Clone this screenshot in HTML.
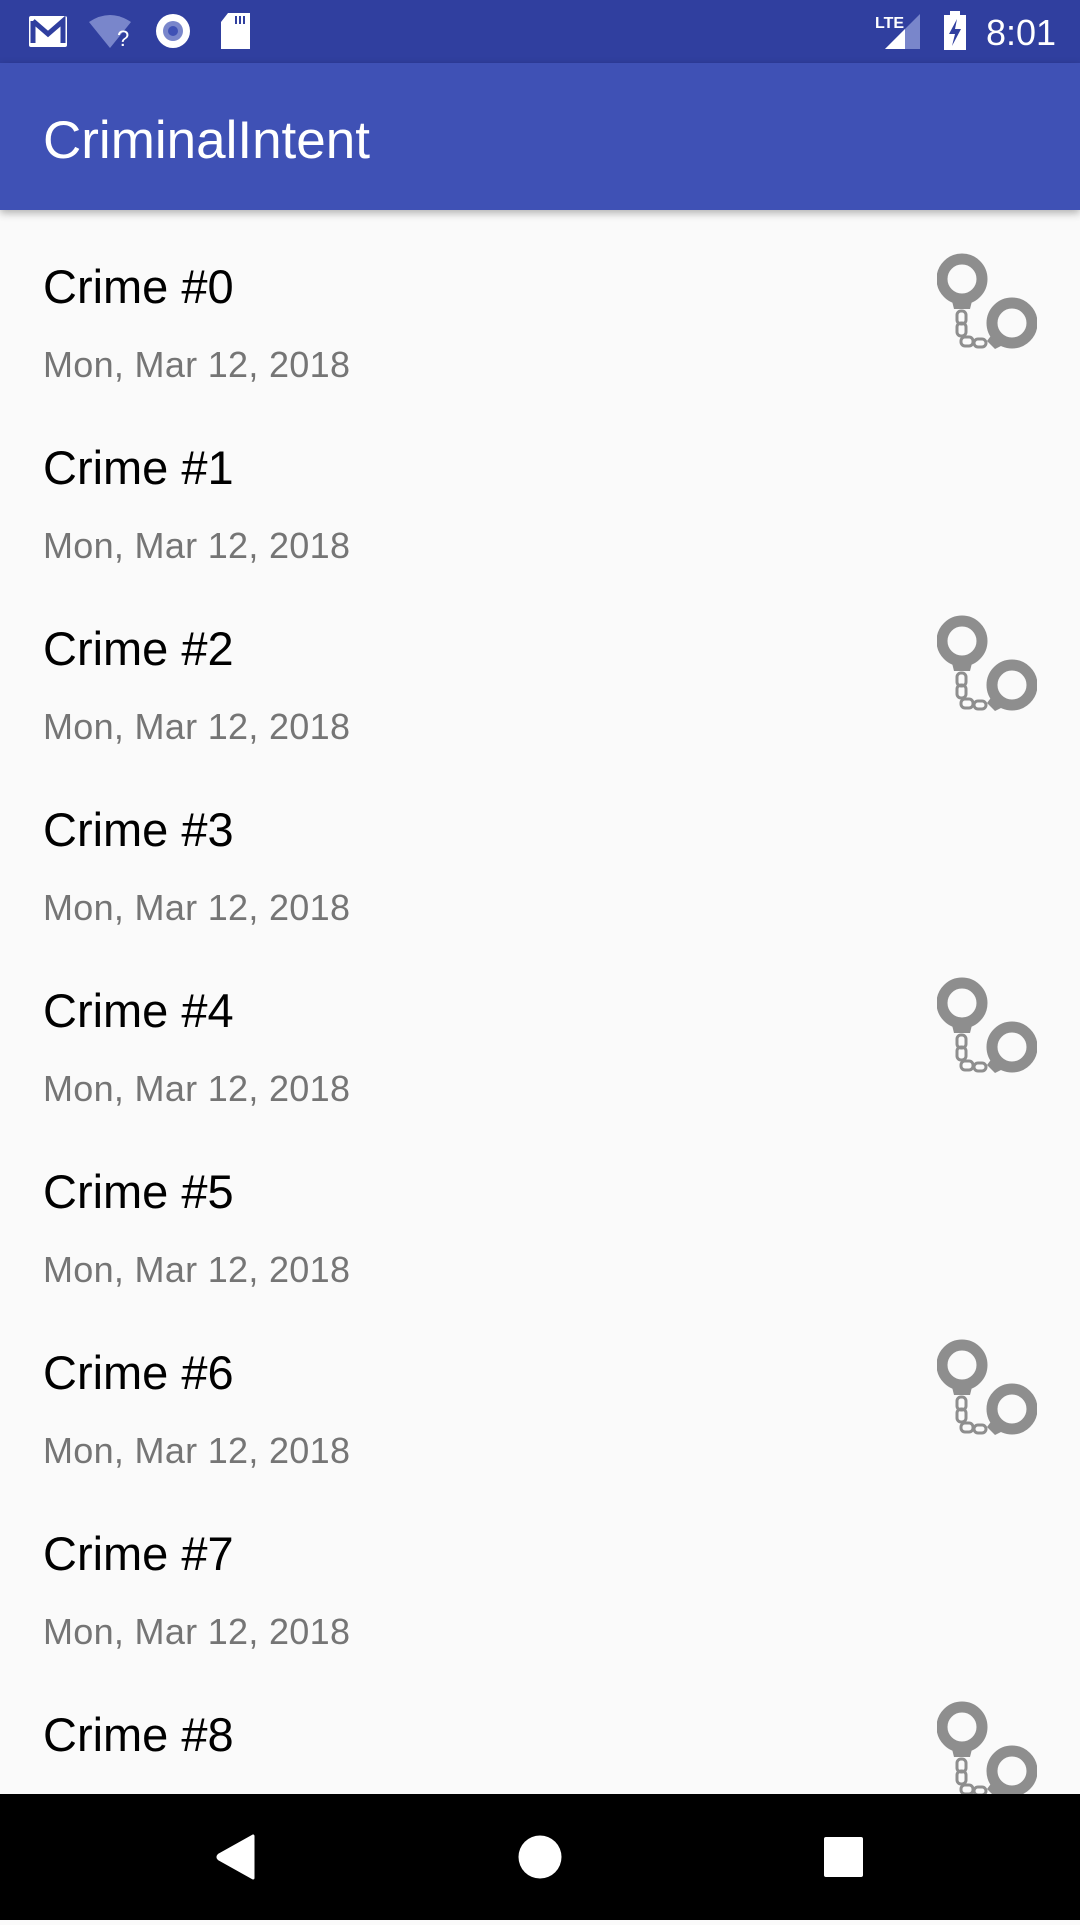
<!DOCTYPE html>
<html><head><meta charset="utf-8"><style>
*{margin:0;padding:0;box-sizing:border-box}
body{width:1080px;height:1920px;overflow:hidden;background:#FAFAFA;font-family:"Liberation Sans",sans-serif;position:relative}
.sb{position:absolute;top:0;left:0;width:1080px;height:63px;background:#303F9F}
.tb{position:absolute;top:63px;left:0;width:1080px;height:147px;background:#3F51B5;box-shadow:0 3px 8px rgba(0,0,0,.3)}
.tb span{position:absolute;left:43px;top:47px;color:#fff;font-size:53px;letter-spacing:0px}
.t{position:absolute;left:43px;font-size:47px;color:#000;letter-spacing:0px}
.d{position:absolute;left:43px;font-size:36px;color:#757575;letter-spacing:0.3px}
.ic{position:absolute;left:937px;width:100px;height:100px}
.nav{position:absolute;top:1794px;left:0;width:1080px;height:126px;background:#000}
</style></head><body>
<div class="sb">
<svg width="1080" height="63" style="position:absolute;left:0;top:0">
<rect x="29" y="16" width="38" height="31" rx="2" fill="#fff"/>
<path d="M33 21 V43 M33 21 L48 34 L63 21 V43" stroke="#303F9F" stroke-width="5" fill="none"/>
<path d="M89 22 Q110 8 131 22 L110 48 Z" fill="#7986CB"/>
<text x="117" y="46" font-size="22" fill="#fff" font-family="Liberation Sans">?</text>
<circle cx="173" cy="31" r="17" fill="#fff"/><circle cx="173" cy="31" r="10" fill="#7986CB"/><circle cx="173" cy="31" r="5" fill="#3F51B5"/>
<path d="M228 13 H250 V49 H221 V22 Z" fill="#fff"/>
<path d="M236 16 V24 M240 16 V24 M244 16 V24" stroke="#303F9F" stroke-width="2"/>
<path d="M885 49 L920 14 V49 Z" fill="#7986CB"/><path d="M885 49 L905 29 V49 Z" fill="#fff"/>
<text x="875" y="28" font-size="16" fill="#fff" font-family="Liberation Sans" font-weight="bold">LTE</text>
<rect x="944" y="15" width="22" height="35" fill="#fff"/><rect x="950" y="11" width="10" height="5" fill="#fff"/>
<path d="M957 19 L949 34 H955 L952 46 L961 29 H955 Z" fill="#303F9F"/>
<text x="986" y="45" font-size="36" fill="#fff" font-family="Liberation Sans">8:01</text>
</svg></div>
<div class="tb"><span>CriminalIntent</span></div>
<svg width="0" height="0" style="position:absolute"><defs>
<g id="hc" fill="#8E8E8E" stroke="none">
<circle cx="25" cy="26" r="20" fill="none" stroke="#8E8E8E" stroke-width="11"/>
<path d="M14 44 H36 L33 56 H17 Z"/>
<circle cx="75" cy="70" r="20" fill="none" stroke="#8E8E8E" stroke-width="11"/>
<path d="M56 80 L66 92 L58 96 L50 88 Z"/>
<g fill="none" stroke="#8E8E8E" stroke-width="3">
<rect x="20" y="58" width="9" height="13" rx="4"/><rect x="20" y="70" width="9" height="13" rx="4"/>
<rect x="24" y="84" width="12" height="9" rx="4"/><rect x="37" y="86" width="12" height="8" rx="4"/>
</g></g></defs></svg>
<div class="t" style="top:259px">Crime #0</div><div class="d" style="top:344px">Mon, Mar 12, 2018</div>
<svg class="ic" style="top:253px"><use href="#hc"/></svg>
<div class="t" style="top:440px">Crime #1</div><div class="d" style="top:525px">Mon, Mar 12, 2018</div>
<div class="t" style="top:621px">Crime #2</div><div class="d" style="top:706px">Mon, Mar 12, 2018</div>
<svg class="ic" style="top:615px"><use href="#hc"/></svg>
<div class="t" style="top:802px">Crime #3</div><div class="d" style="top:887px">Mon, Mar 12, 2018</div>
<div class="t" style="top:983px">Crime #4</div><div class="d" style="top:1068px">Mon, Mar 12, 2018</div>
<svg class="ic" style="top:977px"><use href="#hc"/></svg>
<div class="t" style="top:1164px">Crime #5</div><div class="d" style="top:1249px">Mon, Mar 12, 2018</div>
<div class="t" style="top:1345px">Crime #6</div><div class="d" style="top:1430px">Mon, Mar 12, 2018</div>
<svg class="ic" style="top:1339px"><use href="#hc"/></svg>
<div class="t" style="top:1526px">Crime #7</div><div class="d" style="top:1611px">Mon, Mar 12, 2018</div>
<div class="t" style="top:1707px">Crime #8</div><div class="d" style="top:1792px">Mon, Mar 12, 2018</div>
<svg class="ic" style="top:1701px"><use href="#hc"/></svg>
<div class="nav"><svg width="1080" height="126">
<path d="M253 42 V84 L219 65 Q217 63 219 61 Z" fill="#fff" stroke="#fff" stroke-width="3" stroke-linejoin="round"/>
<circle cx="540" cy="63" r="21.5" fill="#fff"/>
<rect x="824" y="43" width="39" height="40" rx="2" fill="#fff"/>
</svg></div>
</body></html>
